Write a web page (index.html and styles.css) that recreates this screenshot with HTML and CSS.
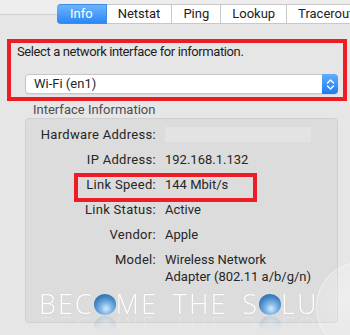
FILE: index.html
```html
<!DOCTYPE html>
<html lang="en">
<head>
    <meta charset="UTF-8">
    <meta name="viewport" content="width=device-width, initial-scale=1.0">
    <title>Network Utility</title>
    <link rel="stylesheet" href="styles.css">
</head>
<body>
    <div class="window">
        <div class="tabbar">
            <div class="tabs">
                <span class="tab active">Info</span>
                <span class="tab">Netstat</span>
                <span class="tab">Ping</span>
                <span class="tab">Lookup</span>
                <span class="tab">Traceroute</span>
            </div>
        </div>

        <div class="select-box">
            <p class="prompt">Select a network interface for information.</p>
            <div class="popup">
                <span class="popup-value">Wi-Fi (en1)</span>
                <span class="stepper">
                    <svg width="9" height="13" viewBox="0 0 9 13">
                        <path d="M1.5 5 L4.5 2 L7.5 5 M1.5 8 L4.5 11 L7.5 8" fill="none" stroke="#fff" stroke-width="1.4" stroke-linecap="round" stroke-linejoin="round"/>
                    </svg>
                </span>
            </div>
        </div>

        <div class="group-title">Interface Information</div>
        <div class="group">
            <div class="info-grid">
                <span class="label">Hardware Address:</span>
                <span class="value"><span class="redacted"></span></span>
                <span class="label">IP Address:</span>
                <span class="value">192.168.1.132</span>
                <span class="label">Link Speed:</span>
                <span class="value">144 Mbit/s</span>
                <span class="label">Link Status:</span>
                <span class="value">Active</span>
                <span class="label">Vendor:</span>
                <span class="value">Apple</span>
                <span class="label">Model:</span>
                <span class="value">Wireless Network<br>Adapter (802.11 a/b/g/n)</span>
            </div>
            <!-- red marker round the link speed row -->
            <div class="speed-mark"></div>
        </div>

        <div class="watermark">
            <span class="wm-text">BEC<span class="orb">O</span>ME THE S<span class="orb">O</span>LU</span>
        </div>
        <div class="bubble"></div>
    </div>
</body>
</html>
```

FILE: styles.css
```css
* {
    margin: 0;
    padding: 0;
    box-sizing: border-box;
}

body {
    font-family: 'Roboto', 'Liberation Sans', sans-serif;
    font-size: 13px;
    color: #262626;
    background: #e6e6e6;
    width: 350px;
    height: 335px;
    overflow: hidden;
}

.window {
    position: relative;
    height: 335px;
    overflow: hidden;
}

/* tabs */
.tabbar {
    height: 24px;
    padding-top: 4px;
    background: linear-gradient(to bottom, #eeeeee 0, #eeeeee 14px, #cfcfcf 14px, #cfcfcf 15px, #e6e6e6 15px);
}

.tabs {
    display: flex;
    margin-left: 57px;
    white-space: nowrap;
}

.tab {
    height: 20px;
    line-height: 18px;
    padding: 0 11px;
    background: #fff;
    border: 1px solid #c8c8c8;
    border-left: none;
    color: #222;
    font-size: 13px;
}

.tab.active {
    background: linear-gradient(to bottom, #6cb4fb, #2a88f8);
    border-color: #3b8de6;
    color: #fff;
    border-radius: 4px 0 0 4px;
    padding: 0 13px;
}

/* interface select */
.select-box {
    margin: 15px 3px 0 7px;
    border: 4px solid #ee1c24;
    padding: 1px 5px 3px 6px;
}

.prompt {
    line-height: 16px;
    letter-spacing: -0.4px;
    color: #1e1e1e;
}

.popup {
    display: flex;
    align-items: center;
    margin: 14px 0 0 8px;
    height: 20px;
    background: #fff;
    border: 1px solid #c6c6c6;
    border-radius: 4px;
    box-shadow: 0 1px 1px rgba(0, 0, 0, 0.06);
}

.popup-value {
    flex: 1;
    padding-left: 8px;
    line-height: 18px;
}

.stepper {
    width: 16px;
    height: 20px;
    margin: -1px -1px -1px 0;
    display: flex;
    align-items: center;
    justify-content: center;
    background: linear-gradient(to bottom, #63adfa, #1c7cf4);
    border-radius: 0 4px 4px 0;
}

/* group */
.group-title {
    margin: 1px 0 0 33px;
    line-height: 16px;
    color: #4d4d4d;
}

.group {
    position: relative;
    margin: 0 12px 0 25px;
    height: 205px;
    background: #dcdcdc;
    border: 1px solid #d0d0d0;
    border-radius: 4px;
    padding-top: 3px;
}

.info-grid {
    display: grid;
    grid-template-columns: 130px 1fr;
    column-gap: 9px;
}

.label,
.value {
    padding: 4px 0;
    line-height: 17px;
}

.label {
    text-align: right;
    letter-spacing: 0.3px;
    color: #262626;
}

.redacted {
    display: block;
    width: 146px;
    height: 15px;
    margin-top: 1px;
    background: #e3e3e3;
}

.speed-mark {
    position: absolute;
    left: 48px;
    top: 54px;
    width: 183px;
    height: 29px;
    border: 4px solid #ee1c24;
}

/* watermark */
.watermark {
    position: absolute;
    left: 39px;
    top: 290px;
    font-family: 'Open Sans', 'Liberation Sans', sans-serif;
    font-size: 27px;
    font-weight: 300;
    letter-spacing: 2px;
    word-spacing: 6px;
    line-height: 28px;
    color: #fff;
    white-space: nowrap;
    -webkit-box-reflect: below -5px linear-gradient(transparent 40%, rgba(0, 0, 0, 0.35));
}

.wm-text {
    text-shadow: 0 0 1px rgba(0, 0, 0, 0.15);
}

.orb {
    display: inline-block;
    width: 22px;
    height: 21px;
    line-height: 21px;
    color: transparent;
    text-shadow: none;
    border-radius: 50%;
    vertical-align: -1px;
    background: radial-gradient(circle at 55% 70%, #d4ecff 0, #7fb6e6 30%, #3c7fbf 65%, #2c5f98 100%);
}

.bubble {
    position: absolute;
    left: 316px;
    top: 262px;
    width: 90px;
    height: 90px;
    border-radius: 50%;
    background: radial-gradient(circle at 30% 40%, rgba(255, 255, 255, 0.35), rgba(255, 255, 255, 0.05) 70%);
    border: 1px solid rgba(255, 255, 255, 0.4);
}
```
